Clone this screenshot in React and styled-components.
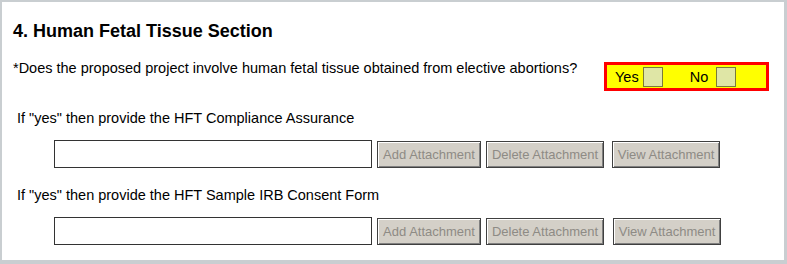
import React from "react";
import styled, { createGlobalStyle } from "styled-components";

const Global = createGlobalStyle`
  html, body { margin: 0; padding: 0; background: #fff; }
  body { font-family: "Liberation Sans", Arial, sans-serif; }
`;

const Frame = styled.div`
  box-sizing: border-box;
  width: 787px;
  height: 264px;
  border-top: 2px solid #c9ced1;
  border-left: 2px solid #c9ced1;
  border-right: 3px solid #c9ced1;
  border-bottom: 4px solid #c9ced1;
  background: #fff;
  padding: 17px 0 0 11px;
  color: #000;
`;

const Title = styled.h2`
  margin: 0;
  font-size: 18px;
  font-weight: bold;
  line-height: 24px;
`;

const QuestionRow = styled.div`
  display: flex;
  align-items: flex-start;
  justify-content: space-between;
  margin-top: 15px;
  padding-right: 15px;
`;

const Question = styled.div`
  font-size: 14.5px;
  line-height: 18px;
  padding-top: 1px;
`;

const YesNo = styled.div`
  display: flex;
  align-items: center;
  box-sizing: border-box;
  width: 165px;
  height: 29px;
  margin-top: 4px;
  border: 3px solid #ff0000;
  background: #ffff00;
  padding-left: 8px;
  font-size: 14.5px;
`;

const Label = styled.span`
  margin-right: 4px;
  margin-left: ${(p) => p.$ml || 0}px;
`;

const Box = styled.span`
  display: inline-block;
  box-sizing: border-box;
  width: 20px;
  height: 20px;
  border: 1px solid #7a7a3a;
  background: #dfe6a6;
`;

const SubLabel = styled.div`
  font-size: 14.5px;
  line-height: 18px;
  margin: ${(p) => p.$mt}px 0 0 4px;
`;

const AttachRow = styled.div`
  display: flex;
  align-items: center;
  margin: ${(p) => p.$mt}px 0 0 41px;
`;

const FileInput = styled.div`
  box-sizing: border-box;
  width: 318px;
  height: 28px;
  border: 1px solid #333;
  background: #fff;
  margin-right: 5px;
`;

const Button = styled.button`
  box-sizing: border-box;
  height: 27px;
  width: ${(p) => p.$w}px;
  margin-right: ${(p) => p.$mr}px;
  padding: 0;
  background: #d4d0c8;
  border: 1px solid #404040;
  box-shadow: inset 1px 1px 0 #fff, inset -1px -1px 0 #808080;
  color: #8e8b85;
  font-family: "Liberation Sans", Arial, sans-serif;
  font-size: 13px;
`;

function Attach({ mt, viewGap }) {
  return (
    <AttachRow $mt={mt}>
      <FileInput />
      <Button $w={104} $mr={5} disabled>Add Attachment</Button>
      <Button $w={118} $mr={viewGap} disabled>Delete Attachment</Button>
      <Button $w={108} $mr={0} disabled>View Attachment</Button>
    </AttachRow>
  );
}

export default function App() {
  return (
    <>
      <Global />
      <Frame>
        <Title>4. Human Fetal Tissue Section</Title>
        <QuestionRow>
          <Question>*Does the proposed project involve human fetal tissue obtained from elective abortions?</Question>
          <YesNo>
            <Label>Yes</Label>
            <Box />
            <Label $ml={27}>No</Label>
            <Box style={{ marginLeft: 4 }} />
          </YesNo>
        </QuestionRow>
        <SubLabel $mt={18}>If "yes" then provide the HFT Compliance Assurance</SubLabel>
        <Attach mt={13} viewGap={8} />
        <SubLabel $mt={18}>If "yes" then provide the HFT Sample IRB Consent Form</SubLabel>
        <Attach mt={13} viewGap={9} />
      </Frame>
    </>
  );
}
